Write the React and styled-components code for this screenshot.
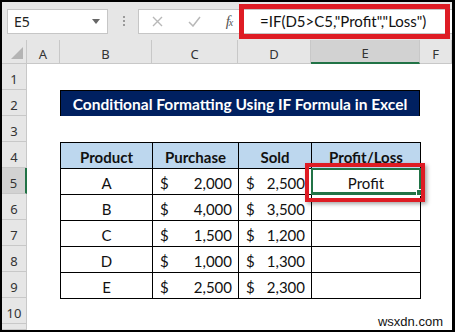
import React from 'react';
import styled, { createGlobalStyle } from 'styled-components';

const GlobalStyle = createGlobalStyle`
	html, body {
		margin: 0;
		padding: 0;
		background: #fff;
	}
	body {
		width: 455px;
		height: 332px;
		overflow: hidden;
	}
`;

const Frame = styled.div`
	position: relative;
	width: 455px;
	height: 332px;
	box-sizing: border-box;
	border: 2px solid #000;
	border-right-width: 3px;
	background: #fff;
	display: flex;
	flex-direction: column;
	overflow: hidden;
	font-family: 'Noto Sans', 'Open Sans', sans-serif;
`;

const TopBar = styled.div`
	height: 38px;
	flex: none;
	background: #e6e6e6;
	display: flex;
	align-items: center;
	padding-left: 5px;
	box-sizing: border-box;
`;

const NameBox = styled.div`
	width: 101px;
	height: 25px;
	box-sizing: border-box;
	background: #fff;
	border: 1px solid #c6c6c6;
	display: flex;
	align-items: center;
	justify-content: space-between;
	padding: 0 7px 0 6px;
	font-size: 14px;
	color: #222;
`;

const Dots = styled.div`
	margin-left: 15px;
	display: flex;
	flex-direction: column;
	gap: 2px;

	span {
		width: 2px;
		height: 2px;
		background: #9a9a9a;
	}
`;

const FormulaBox = styled.div`
	margin-left: 13px;
	flex: 1;
	height: 25px;
	box-sizing: border-box;
	background: #fff;
	border: 1px solid #c6c6c6;
	border-right: none;
	display: flex;
	align-items: center;
`;

const IconSlot = styled.div`
	width: ${p => p.$w}px;
	display: flex;
	justify-content: center;
	align-items: center;
`;

const Fx = styled.div`
	font-family: 'Liberation Serif', serif;
	font-style: italic;
	font-size: 15px;
	color: #555;
	letter-spacing: -1px;

	small {
		font-size: 10px;
	}
`;

const FormulaInput = styled.div`
	position: relative;
	flex: 1;
	height: 100%;
	display: flex;
	align-items: center;
	padding-left: 15px;
	font-family: 'Lato', sans-serif;
	font-size: 15px;
	color: #111;
`;

const Highlight = styled.div`
	position: absolute;
	left: ${p => p.$l}px;
	right: ${p => p.$r}px;
	top: ${p => p.$t}px;
	bottom: ${p => p.$b}px;
	border: ${p => p.$w}px solid #de1c24;
	box-shadow: ${p => (p.$shadow ? '2px 2px 4px rgba(0,0,0,0.35)' : 'none')};
	pointer-events: none;
`;

const Sheet = styled.div`
	flex: 1;
	display: grid;
	grid-template-columns: 25px 33px 92px 86px 73px 109px 1fr;
	grid-template-rows: 24px repeat(10, 26px) 1fr;
	background: #fff;
	min-height: 0;
`;

const Corner = styled.div`
	background: #e6e6e6;
	border-right: 1px solid #c8c8c8;
	border-bottom: 1px solid #c8c8c8;
	display: flex;
	justify-content: flex-end;
	align-items: flex-end;
	padding: 0 3px 4px 0;
`;

const ColHeader = styled.div`
	background: ${p => (p.$selected ? '#d2d2d2' : '#e6e6e6')};
	border-right: 1px solid #c8c8c8;
	border-bottom: ${p => (p.$selected ? '2px solid #217346' : '1px solid #c8c8c8')};
	display: flex;
	justify-content: center;
	align-items: center;
	padding-top: 4px;
	box-sizing: border-box;
	font-size: 13px;
	color: #333;
`;

const RowHeader = styled.div`
	grid-column: 1;
	background: ${p => (p.$selected ? '#d2d2d2' : '#e6e6e6')};
	border-right: ${p => (p.$selected ? '2px solid #217346' : '1px solid #c8c8c8')};
	border-bottom: 1px solid #c8c8c8;
	display: flex;
	justify-content: center;
	align-items: center;
	padding-top: 4px;
	box-sizing: border-box;
	font-size: 13px;
	color: #333;
`;

const Title = styled.div`
	grid-row: 3;
	grid-column: 3 / 7;
	background: #002060;
	color: #fff;
	font-family: 'Lato', sans-serif;
	font-weight: 700;
	font-size: 15.5px;
	display: flex;
	align-items: center;
	justify-content: center;
	border: 1px solid #000;
	border-bottom-width: 0;
`;

const TableArea = styled.div`
	grid-row: 5 / 11;
	grid-column: 3 / 7;
`;

const Table = styled.table`
	width: 100%;
	height: 100%;
	border-collapse: collapse;
	table-layout: fixed;
	font-family: 'Lato', sans-serif;
	font-size: 15px;
	color: #111;

	th, td {
		border: 1px solid #000;
		padding: 0;
		height: 26px;
		box-sizing: border-box;
	}

	th {
		background: #bdd7ee;
		font-weight: 700;
		padding-top: 2px;
	}

	td {
		text-align: center;
		padding-top: 2px;
	}
`;

const Money = styled.div`
	display: flex;
	justify-content: space-between;
	padding: 0 6px 0 7px;
`;

const SelectedCell = styled.td`
	position: relative;
`;

const Selection = styled.div`
	position: absolute;
	left: -1px;
	right: -1px;
	top: -1px;
	bottom: -1px;
	border: 2px solid #217346;
	border-bottom-width: 3px;
	pointer-events: none;
`;

const FillHandle = styled.div`
	position: absolute;
	right: -4px;
	bottom: -4px;
	width: 5px;
	height: 5px;
	background: #217346;
	border: 1px solid #fff;
`;

const Watermark = styled.div`
	position: absolute;
	right: 7px;
	bottom: 1px;
	padding: 0 2px;
	background: rgba(255, 255, 255, 0.85);
	font-family: 'Liberation Sans', sans-serif;
	font-size: 13px;
	color: #111;
`;

const columns = ['A', 'B', 'C', 'D', 'E', 'F'];

const rows = [
	{product: 'A', purchase: '2,000', sold: '2,500', result: 'Profit'},
	{product: 'B', purchase: '4,000', sold: '3,500'},
	{product: 'C', purchase: '1,500', sold: '1,200'},
	{product: 'D', purchase: '1,000', sold: '1,300'},
	{product: 'E', purchase: '2,500', sold: '2,300'},
];

const App = () => {
	return (
		<Frame>
			<GlobalStyle />
			<TopBar>
				<NameBox>
					<span>E5</span>
					<svg width='8' height='5' viewBox='0 0 8 5'>
						<path d='M0 0 L8 0 L4 5 Z' fill='#666' />
					</svg>
				</NameBox>
				<Dots><span /><span /><span /></Dots>
				<FormulaBox>
					<IconSlot $w={36}>
						<svg width='11' height='11' viewBox='0 0 11 11'>
							<path d='M1 1 L10 10 M10 1 L1 10' stroke='#b8b8b8' strokeWidth='1.4' />
						</svg>
					</IconSlot>
					<IconSlot $w={38}>
						<svg width='13' height='11' viewBox='0 0 13 11'>
							<path d='M1 6 L5 10 L12 1' stroke='#b8b8b8' strokeWidth='1.5' fill='none' />
						</svg>
					</IconSlot>
					<IconSlot $w={32}>
						<Fx>f<small>x</small></Fx>
					</IconSlot>
					<FormulaInput>
						=IF(D5&gt;C5,"Profit","Loss")
						<Highlight $l={-6} $r={2} $t={-6} $b={-6} $w={5} />
					</FormulaInput>
				</FormulaBox>
			</TopBar>

			<Sheet>
				<Corner>
					<svg width='12' height='12' viewBox='0 0 12 12'>
						<path d='M12 0 L12 12 L0 12 Z' fill='#b4b4b4' />
					</svg>
				</Corner>
				{columns.map(c => (
					<ColHeader key={c} $selected={c === 'E'}>{c}</ColHeader>
				))}
				{Array.from({length: 11}, (_, i) => (
					<RowHeader key={i} $selected={i === 4}>{i < 10 ? i + 1 : ''}</RowHeader>
				))}

				<Title>Conditional Formatting Using IF Formula in Excel</Title>

				<TableArea>
					<Table>
						<colgroup>
							<col style={{width: 92}} />
							<col style={{width: 86}} />
							<col style={{width: 73}} />
							<col style={{width: 109}} />
						</colgroup>
						<thead>
							<tr>
								<th>Product</th>
								<th>Purchase</th>
								<th>Sold</th>
								<th>Profit/Loss</th>
							</tr>
						</thead>
						<tbody>
							{rows.map((r, i) => (
								<tr key={r.product}>
									<td>{r.product}</td>
									<td><Money><span>$</span><span>{r.purchase}</span></Money></td>
									<td><Money><span>$</span><span>{r.sold}</span></Money></td>
									{i === 0 ? (
										<SelectedCell>
											{r.result}
											<Selection><FillHandle /></Selection>
											<Highlight $l={-7} $r={-5} $t={-6} $b={-8} $w={4} $shadow />
										</SelectedCell>
									) : (
										<td />
									)}
								</tr>
							))}
						</tbody>
					</Table>
				</TableArea>
			</Sheet>

			<Watermark>wsxdn.com</Watermark>
		</Frame>
	);
};

export default App;
